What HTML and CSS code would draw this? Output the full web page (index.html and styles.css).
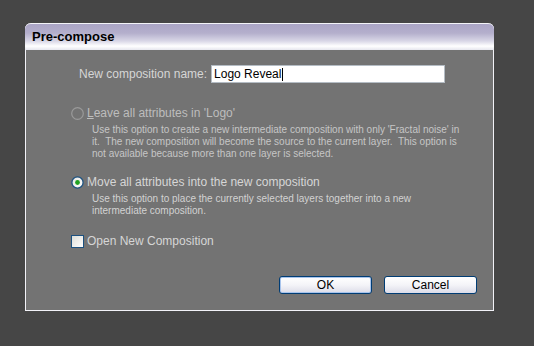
FILE: index.html
```html
<!DOCTYPE html>
<html>
<head>
  <meta charset="UTF-8">
  <title>Pre-compose</title>
  <link rel="stylesheet" href="styles.css">
</head>
<body>
  <div class="dialog">
    <div class="titlebar">Pre-compose</div>
    <div class="content">
      <div class="name-row">
        <label for="compname">New composition name:</label>
        <div class="field" id="compname">Logo Reveal<span class="caret"></span></div>
      </div>

      <div class="option disabled">
        <svg class="radio" width="13" height="13" viewBox="0 0 13 13">
          <circle cx="6.5" cy="6.5" r="5.8" fill="none" stroke="#9a9a9a" stroke-width="1.2"/>
        </svg>
        <span><u>L</u>eave all attributes in 'Logo'</span>
      </div>
      <p class="desc">Use this option to create a new intermediate composition with only 'Fractal noise' in<br>it.&nbsp; The new composition will become the source to the current layer.&nbsp; This option is<br>not available because more than one layer is selected.</p>

      <div class="option">
        <svg class="radio" width="13" height="13" viewBox="0 0 13 13">
          <defs>
            <linearGradient id="rg" x1="0" y1="0" x2="1" y2="1">
              <stop offset="0" stop-color="#e4e4e0"/>
              <stop offset="1" stop-color="#ffffff"/>
            </linearGradient>
          </defs>
          <circle cx="6.5" cy="6.5" r="5.6" fill="url(#rg)" stroke="#1d5281" stroke-width="1.3"/>
          <circle cx="6.5" cy="6.5" r="2.4" fill="#21a121"/>
        </svg>
        <span>Move all attributes into the new composition</span>
      </div>
      <p class="desc">Use this option to place the currently selected layers together into a new<br>intermediate composition.</p>

      <div class="option check-row">
        <svg class="radio" width="13" height="13" viewBox="0 0 13 13">
          <defs>
            <linearGradient id="cg" x1="0" y1="0" x2="1" y2="1">
              <stop offset="0" stop-color="#dcdcd6"/>
              <stop offset="1" stop-color="#ffffff"/>
            </linearGradient>
          </defs>
          <rect x="0.5" y="0.5" width="12" height="12" fill="url(#cg)" stroke="#1c5180"/>
        </svg>
        <span>Open New Composition</span>
      </div>

      <div class="buttons">
        <button class="btn default">OK</button>
        <button class="btn">Cancel</button>
      </div>
    </div>
  </div>
</body>
</html>
```

FILE: styles.css
```css
body {
  margin: 0;
  background-color: #464646;
  font-family: "Liberation Sans", Arial, sans-serif;
}

.dialog {
  width: 467px;
  height: 287px;
  margin: 23px 0 0 25px;
  border: 1px solid #f2f2f8;
  border-top: none;
  border-radius: 6px 6px 0 0;
  box-shadow: 0 1px 0 #7d7aa6;
  background-color: #737373;
  display: flex;
  flex-direction: column;
}

.titlebar {
  height: 26px;
  margin: 0 -1px;
  padding-left: 7px;
  border-top: 1px solid #f4f4f8;
  border-radius: 6px 6px 0 0;
  background: linear-gradient(#aba5c6 0%, #b4afcc 35%, #d8d6e6 65%, #ffffff 85%, #e6e6ee 100%);
  color: #000;
  font-size: 13px;
  font-weight: bold;
  line-height: 26px;
}

.content {
  flex: 1;
  padding: 15px 16px 0 45px;
  color: #d6d6d6;
  font-size: 12px;
}

.name-row {
  display: flex;
  align-items: center;
  height: 18px;
  padding-left: 8px;
  gap: 4px;
}

.field {
  box-sizing: border-box;
  width: 234px;
  height: 18px;
  border: 1px solid #b4bcc4;
  background-color: #fff;
  color: #000;
  font-size: 12px;
  line-height: 16px;
  padding-left: 2px;
  display: flex;
  align-items: center;
}

.caret {
  width: 1px;
  height: 13px;
  margin-left: 1px;
  background-color: #000;
}

.option {
  display: flex;
  align-items: center;
  gap: 3px;
  height: 14px;
  margin-top: 15px;
}

.option.disabled {
  margin-top: 23px;
  color: #bdbdbd;
}

.check-row {
  margin-top: 17px;
}

.desc {
  margin: 4px 0 0 21px;
  font-size: 10px;
  line-height: 12px;
  color: #d2d2d2;
}

.disabled + .desc {
  color: #c6c6c6;
}

.buttons {
  display: flex;
  justify-content: flex-end;
  gap: 12px;
  margin-top: 28px;
}

.btn {
  width: 93px;
  height: 18px;
  padding: 0;
  border: 1px solid #003c74;
  border-radius: 3px;
  background: linear-gradient(#ffffff 0%, #f4f4f8 50%, #dcdce8 100%);
  color: #000;
  font-family: "Liberation Sans", Arial, sans-serif;
  font-size: 12px;
  line-height: 16px;
}

.btn.default {
  box-shadow: inset 0 0 0 1px #a8c4ec;
}
```
